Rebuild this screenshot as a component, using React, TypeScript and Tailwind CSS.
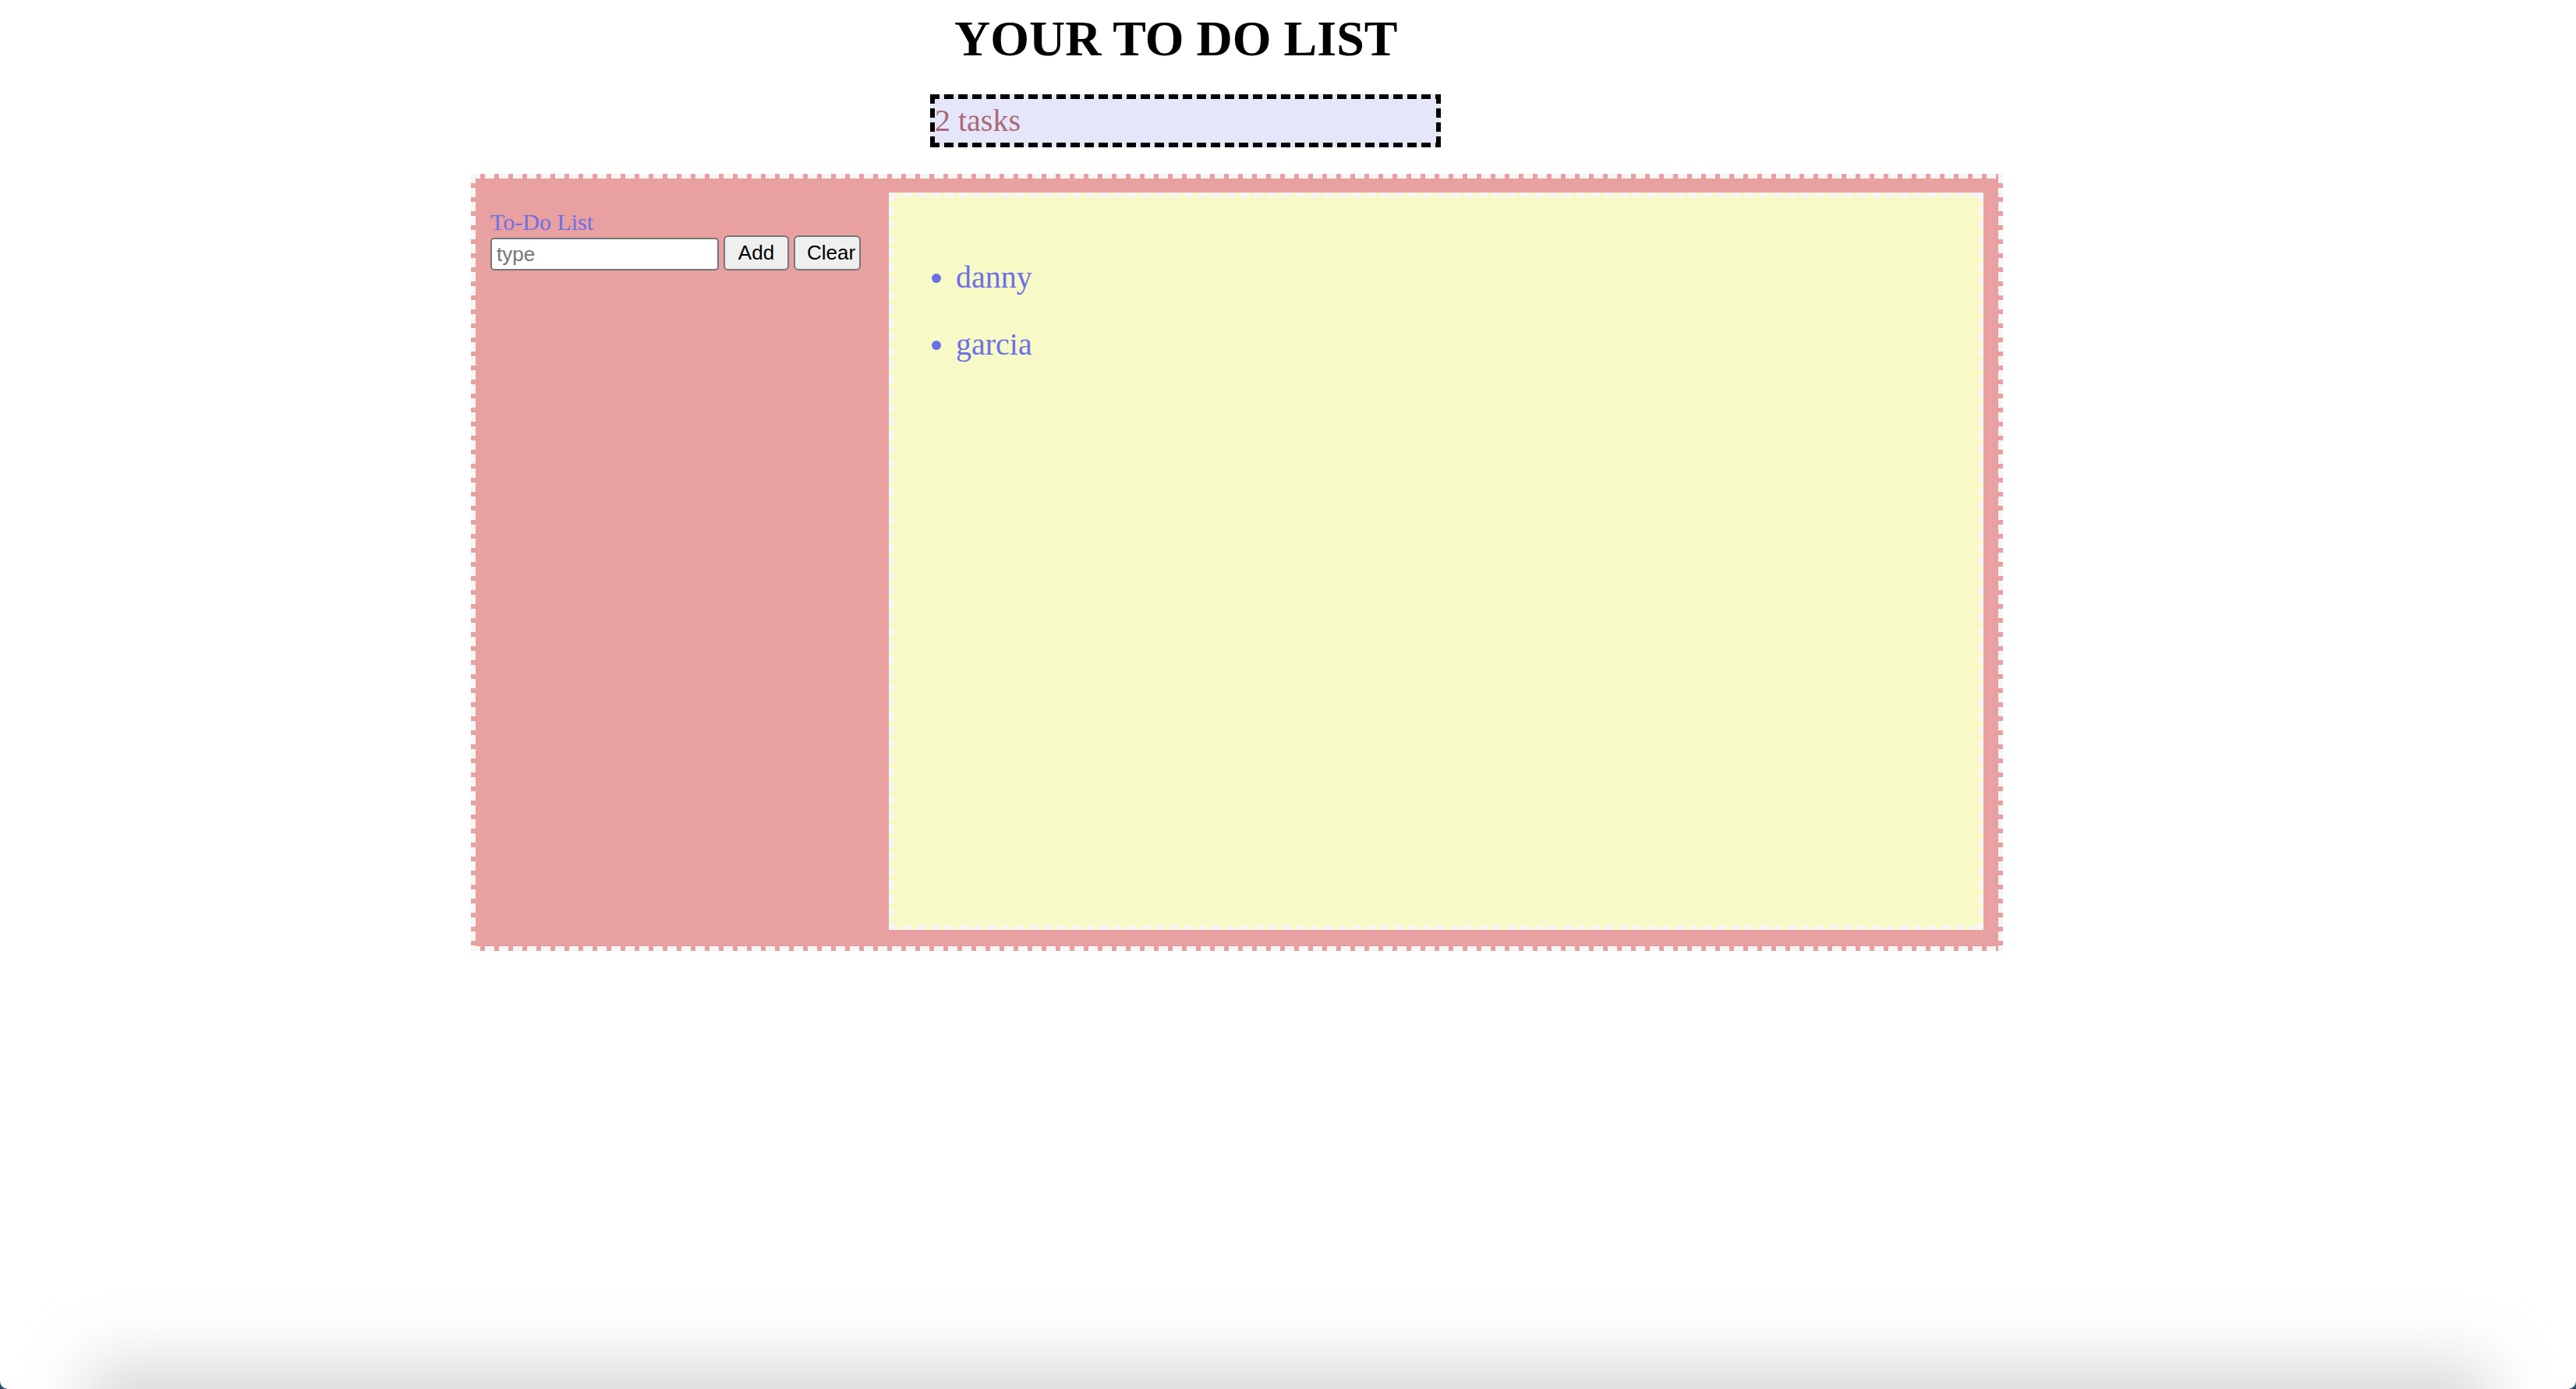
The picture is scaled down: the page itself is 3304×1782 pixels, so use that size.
const tasks = ["danny", "garcia"];

const App = () => {
    return (
        <div className="w-[3304px] h-[1782px] overflow-hidden bg-[#2c4a6c]">
            <div className="relative h-full overflow-hidden rounded-b-[10px] bg-white font-['Liberation_Serif',serif]">
                <div className="pt-[18px]">
                    <h1 className="ml-[1224px] text-[64px] leading-none font-bold text-black">
                        YOUR TO DO LIST
                    </h1>

                    {/* task count, dashed black edge */}
                    <div className="ml-[1193px] mt-[39px] w-[655px] h-[68px] p-[6px] [background:repeating-linear-gradient(90deg,#000_0_12px,transparent_12px_18px)_top/100%_6px_no-repeat,repeating-linear-gradient(90deg,#000_0_12px,transparent_12px_18px)_bottom/100%_6px_no-repeat,repeating-linear-gradient(180deg,#000_0_12px,transparent_12px_18px)_left/6px_100%_no-repeat,repeating-linear-gradient(180deg,#000_0_12px,transparent_12px_18px)_right/6px_100%_no-repeat,#e6e6fa]">
                        <div className="text-[40px] leading-[56px] text-[#a96a74]">{tasks.length} tasks</div>
                    </div>

                    {/* pink box with dotted light edge */}
                    <div className="ml-[604px] mt-[34px] w-[1965px] h-[997px] p-[6px] [background:repeating-linear-gradient(90deg,#f6f6f6_0_12px,transparent_12px_18px)_top/100%_6px_no-repeat,repeating-linear-gradient(90deg,#f6f6f6_0_12px,transparent_12px_18px)_bottom/100%_6px_no-repeat,repeating-linear-gradient(180deg,#f6f6f6_0_12px,transparent_12px_18px)_left/6px_100%_no-repeat,repeating-linear-gradient(180deg,#f6f6f6_0_12px,transparent_12px_18px)_right/6px_100%_no-repeat,#e8a0a0]">
                        <div className="flex h-full">
                            <div className="w-[530px] shrink-0 pl-[19px] pt-[41px]">
                                <div className="text-[30px] leading-[30px] text-[#6c6fea]">To-Do List</div>
                                <div className="mt-[2px] flex items-end gap-[6px] font-['Liberation_Sans',Arial,sans-serif] text-[26px]">
                                    <input
                                        type="text"
                                        placeholder="type"
                                        className="w-[293px] h-[42px] rounded-[5px] border-2 border-[#767676] bg-white px-[6px] text-black placeholder:text-[#757575] outline-none"
                                    />
                                    <button className="w-[84px] h-[45px] rounded-[6px] border-2 border-[#767676] bg-[#efefef] text-black">
                                        Add
                                    </button>
                                    <button className="w-[86px] h-[45px] rounded-[6px] border-2 border-[#767676] bg-[#efefef] pl-[15px] text-left text-black whitespace-nowrap overflow-hidden">
                                        Clear
                                    </button>
                                </div>
                            </div>
                            <div className="flex-1 mt-[18px] mb-[21px] mr-[19px] p-[6px] [background:repeating-linear-gradient(90deg,#f6f6f6_0_12px,transparent_12px_18px)_top/100%_6px_no-repeat,repeating-linear-gradient(90deg,#f6f6f6_0_12px,transparent_12px_18px)_bottom/100%_6px_no-repeat,repeating-linear-gradient(180deg,#f6f6f6_0_12px,transparent_12px_18px)_left/6px_100%_no-repeat,repeating-linear-gradient(180deg,#f6f6f6_0_12px,transparent_12px_18px)_right/6px_100%_no-repeat,#f7f9c6]">
                                <ul className="list-disc pl-[80px] pt-[60px] text-[40px] leading-[86px] text-[#6c6fea] marker:text-[#6c6fea]">
                                    {tasks.map((t) => (
                                        <li key={t}>{t}</li>
                                    ))}
                                </ul>
                            </div>
                        </div>
                    </div>
                </div>

                {/* soft shadow at the foot of the window */}
                <div className="pointer-events-none absolute left-[110px] right-[110px] top-[1748px] h-[200px] bg-[#d9d9d9] blur-[40px]" />
            </div>
        </div>
    );
};

export default App;
